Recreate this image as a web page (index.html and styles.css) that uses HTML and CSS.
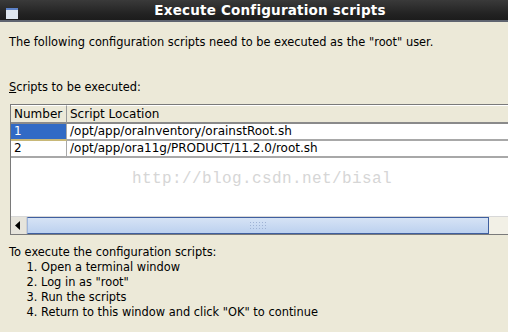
FILE: index.html
```html
<!DOCTYPE html>
<html>
<head>
<meta charset="utf-8">
<link rel="stylesheet" href="styles.css">
</head>
<body>
<div class="window">
  <div class="titlebar">
    <span class="winicon"></span>
    <span class="title">Execute Configuration scripts</span>
  </div>
  <div class="content">
    <p class="intro">The following configuration scripts need to be executed as the "root" user.</p>
    <p class="label"><u>S</u>cripts to be executed:</p>
    <div class="tablebox">
      <div class="grid">
        <div class="hd c1">Number</div>
        <div class="hd c2">Script Location</div>
        <div class="cell c1 sel">1</div>
        <div class="cell c2">/opt/app/oraInventory/orainstRoot.sh</div>
        <div class="cell c1">2</div>
        <div class="cell c2">/opt/app/ora11g/PRODUCT/11.2.0/root.sh</div>
      </div>
      <div class="empty">
        <span class="watermark">http://blog.csdn.net/bisal</span>
      </div>
      <div class="hscroll">
        <div class="sbtn"><svg width="7" height="9" viewBox="0 0 7 9"><path d="M5 0 L0 4.5 L5 9 Z" fill="#000"/></svg></div>
        <div class="thumb"><span class="grip"></span></div>
        <div class="track"></div>
      </div>
    </div>
    <div class="steps">
      <p>To execute the configuration scripts:</p>
      <ol>
        <li>Open a terminal window</li>
        <li>Log in as "root"</li>
        <li>Run the scripts</li>
        <li>Return to this window and click "OK" to continue</li>
      </ol>
    </div>
  </div>
</div>
</body>
</html>
```
FILE: styles.css
```css
html, body {
  margin: 0;
  padding: 0;
  width: 508px;
  height: 332px;
  overflow: hidden;
  background: #ece9d8;
}
.window {
  font-family: "DejaVu Sans", sans-serif;
  font-size: 11.4px;
  color: #000;
}
.titlebar {
  height: 20px;
  background: linear-gradient(#3a3a3a, #222 70%, #1c1c1c);
  border-bottom: 2px solid #5f6470;
  display: flex;
  align-items: center;
}
.winicon {
  width: 12px;
  height: 9px;
  margin-left: 6px;
  margin-top: 6px;
  background: #dfe6ee;
  border-top: 2px solid #5d82c8;
}
.title {
  flex: 1;
  text-align: center;
  color: #fff;
  font-weight: bold;
  font-size: 13.5px;
  margin-left: 14px;
  letter-spacing: 0.2px;
}
.content {
  padding: 0 0 0 9px;
}
.intro {
  margin: 13px 0 0 0;
  line-height: 15px;
}
.label {
  margin: 30px 0 0 0;
  line-height: 15px;
}
.tablebox {
  margin: 9px 0 0 1px;
  width: 520px;
  border: 1px solid #7a7a7a;
  border-right: none;
  background: #fff;
  font-size: 12px;
}
.grid {
  display: grid;
  grid-template-columns: 56px 1fr;
}
.hd {
  background: #ece9d8;
  height: 16px;
  line-height: 16px;
  padding-left: 3px;
  border-top: 1px solid #fff;
  border-bottom: 2px solid #8a8a8a;
  border-right: 1px solid #9a9a9a;
}
.cell {
  height: 15px;
  line-height: 15px;
  padding-left: 3px;
  border-bottom: 2px solid #a8a8a8;
  border-right: 1px solid #a8a8a8;
}
.cell.sel {
  background: #316ac5;
  color: #fff;
  border-bottom-color: #c8b878;
}
.empty {
  height: 58px;
  position: relative;
}
.watermark {
  position: absolute;
  left: 121px;
  top: 12px;
  font-family: "Liberation Mono", monospace;
  font-size: 16px;
  color: #d6d6d6;
  letter-spacing: 0.4px;
}
.hscroll {
  display: flex;
  height: 17px;
  border-top: 1px solid #d8d8d8;
  background: #ece9d8;
}
.sbtn {
  width: 15px;
  display: flex;
  align-items: center;
  justify-content: center;
  background: #e6e4dc;
  border-right: 1px solid #d0d0d0;
}
.thumb {
  width: 462px;
  background: linear-gradient(#d6e3f5, #bcd1ef);
  border: 1px solid #3f5f9f;
  border-left-color: #9fb6dc;
  box-sizing: border-box;
  display: flex;
  align-items: center;
  justify-content: center;
}
.grip {
  width: 18px;
  height: 10px;
  background-image: radial-gradient(circle, #9eb2d4 0.5px, transparent 0.9px);
  background-size: 3px 3px;
}
.track {
  flex: 1;
  background: #f2f0e6;
}
.steps {
  margin-top: 10px;
  line-height: 15px;
}
.steps p {
  margin: 0;
}
.steps ol {
  margin: 0;
  padding-left: 32px;
}
```
